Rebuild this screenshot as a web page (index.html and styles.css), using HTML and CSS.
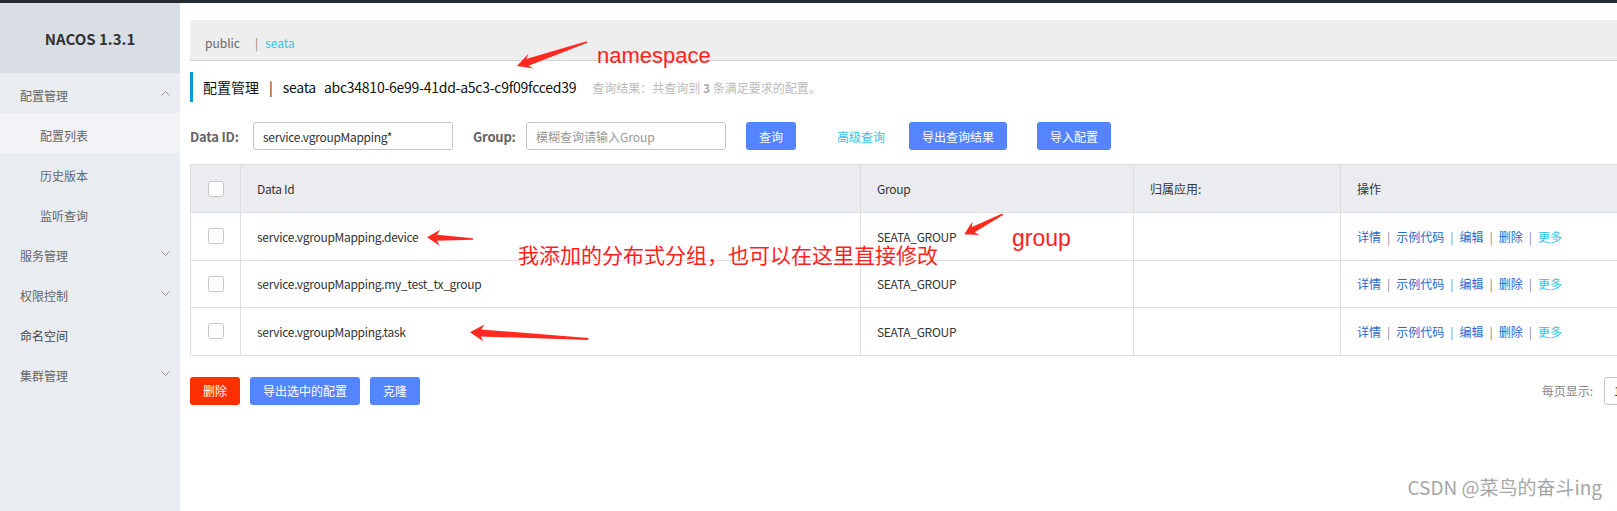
FILE: index.html
```html
<!DOCTYPE html>
<html lang="zh-CN">
<head>
<meta charset="utf-8">
<title>Nacos 配置列表</title>
<link rel="stylesheet" href="styles.css">
</head>
<body>
<div class="topbar"></div>
<div class="layout">
  <aside class="sidebar">
    <div class="logo">NACOS 1.3.1</div>
    <ul class="menu">
      <li class="menu-item"><span>配置管理</span><svg class="chev" width="9" height="5" viewBox="0 0 9 5"><polyline points="0.5,4.5 4.5,0.5 8.5,4.5"/></svg></li>
      <li class="menu-item sub active"><span>配置列表</span></li>
      <li class="menu-item sub"><span>历史版本</span></li>
      <li class="menu-item sub"><span>监听查询</span></li>
      <li class="menu-item"><span>服务管理</span><svg class="chev" width="9" height="5" viewBox="0 0 9 5"><polyline points="0.5,0.5 4.5,4.5 8.5,0.5"/></svg></li>
      <li class="menu-item"><span>权限控制</span><svg class="chev" width="9" height="5" viewBox="0 0 9 5"><polyline points="0.5,0.5 4.5,4.5 8.5,0.5"/></svg></li>
      <li class="menu-item leaf"><span>命名空间</span></li>
      <li class="menu-item"><span>集群管理</span><svg class="chev" width="9" height="5" viewBox="0 0 9 5"><polyline points="0.5,0.5 4.5,4.5 8.5,0.5"/></svg></li>
    </ul>
  </aside>
  <main class="main">
    <div class="ns-bar"><span class="ns">public</span><span class="ns-sep">|</span><span class="ns ns-active">seata</span></div>
    <div class="title">
      <span>配置管理</span><span class="title-sep">|</span><span class="latin">seata</span><span class="ns-id latin">abc34810-6e99-41dd-a5c3-c9f09fcced39</span>
      <span class="result">查询结果：共查询到 <b>3</b> 条满足要求的配置。</span>
    </div>
    <div class="search">
      <span class="lbl lbl-id">Data ID:</span>
      <div class="input latin">service.vgroupMapping*</div>
      <span class="lbl lbl-group">Group:</span>
      <div class="input input-group placeholder">模糊查询请输入Group</div>
      <button class="btn btn-query">查询</button>
      <a class="adv">高级查询</a>
      <button class="btn btn-export">导出查询结果</button>
      <button class="btn btn-import">导入配置</button>
    </div>
    <table class="grid">
      <colgroup><col class="w1"><col class="w2"><col class="w3"><col class="w4"><col class="w5"></colgroup>
      <thead>
        <tr><th class="c1"><span class="cb"></span></th><th class="latin">Data Id</th><th class="latin">Group</th><th>归属应用:</th><th>操作</th></tr>
      </thead>
      <tbody>
        <tr><td class="c1"><span class="cb"></span></td><td class="latin">service.vgroupMapping.device</td><td class="latin">SEATA_GROUP</td><td></td>
          <td class="ops"><a>详情</a><span class="sep">|</span><a>示例代码</a><span class="sep">|</span><a>编辑</a><span class="sep">|</span><a>删除</a><span class="sep">|</span><a class="more">更多</a></td></tr>
        <tr><td class="c1"><span class="cb"></span></td><td class="latin">service.vgroupMapping.my_test_tx_group</td><td class="latin">SEATA_GROUP</td><td></td>
          <td class="ops"><a>详情</a><span class="sep">|</span><a>示例代码</a><span class="sep">|</span><a>编辑</a><span class="sep">|</span><a>删除</a><span class="sep">|</span><a class="more">更多</a></td></tr>
        <tr><td class="c1"><span class="cb"></span></td><td class="latin">service.vgroupMapping.task</td><td class="latin">SEATA_GROUP</td><td></td>
          <td class="ops"><a>详情</a><span class="sep">|</span><a>示例代码</a><span class="sep">|</span><a>编辑</a><span class="sep">|</span><a>删除</a><span class="sep">|</span><a class="more">更多</a></td></tr>
      </tbody>
    </table>
    <div class="actions">
      <button class="btn btn-danger">删除</button>
      <button class="btn btn-exp2">导出选中的配置</button>
      <button class="btn btn-clone">克隆</button>
      <div class="pager"><span class="pager-label">每页显示:</span><div class="select">10</div></div>
    </div>
  </main>
</div>

<svg class="annot" width="1617" height="511" viewBox="0 0 1617 511">
  <polygon points="586.7,41.2 526.2,59.1 528.6,53.5 517,66 533.8,68.6 528.5,65.7 587.3,42.8"/>
  <polygon points="473,238.2 437.1,234.7 440.3,229.8 427,237.3 439.7,245.8 436.9,240.7 473,239.8"/>
  <polygon points="588.4,338 481.2,329.4 484.5,324.6 470,332.3 483.5,341.6 480.8,336.4 588.2,340"/>
  <polygon points="1002.3,213.6 971.8,227 972.4,221.6 964.3,234.3 979.3,235 974.6,232.3 1003.1,215"/>
</svg>
<div class="note note-ns">namespace</div>
<div class="note note-group">group</div>
<div class="note note-cn">我添加的分布式分组，也可以在这里直接修改</div>
<div class="watermark">CSDN @菜鸟的奋斗ing</div>
</body>
</html>
```

FILE: styles.css
```css
* { box-sizing: border-box; margin: 0; padding: 0; }
html, body { width: 1617px; height: 511px; overflow: hidden; }
body {
  position: relative;
  font-family: "Noto Sans CJK SC", "Noto Sans", sans-serif;
  font-size: 12px;
  color: #333;
  background: #fff;
}
.latin { letter-spacing: -0.3px; }
.topbar { height: 3px; background: #252a31; }
.layout { display: flex; height: 508px; }

/* sidebar */
.sidebar { width: 180px; flex: none; background: #e9ecf1; }
.logo {
  height: 70px; background: #d9dde4;
  display: flex; align-items: center; justify-content: center;
  font-weight: bold; font-size: 15px; color: #333;
}
.menu { list-style: none; }
.menu-item {
  height: 40px; display: flex; align-items: center; justify-content: space-between;
  padding: 0 10px 0 20px; color: #666;
}
.menu-item span { padding-top: 5px; }
.menu-item.sub { padding-left: 40px; }
.menu-item.active { background: #f2f3f6; }
.menu-item.leaf { color: #444; }
.chev polyline { fill: none; stroke: #9a9a9a; stroke-width: 1; }

/* main */
.main { flex: 1; min-width: 0; overflow: hidden; padding: 17px 0 0 10px; }
.ns-bar {
  height: 41px; background: #eee; border-bottom: 1px solid #d2d2d2;
  display: flex; align-items: center; padding: 5px 0 0 15px;
}
.ns { color: #666; }
.ns-sep { color: #8a8a7a; margin: 0 7px 0 15px; }
.ns-active { color: #33c3e5; }

.title {
  margin-top: 11px; height: 30px; border-left: 3px solid #0b9bd7;
  padding-left: 10px; display: flex; align-items: center;
  font-size: 14px; color: #111;
}
.title-sep { margin: 0 10px; }
.ns-id { margin-left: 8px; letter-spacing: -0.25px; }
.result { margin-left: 16px; font-size: 12px; color: #bbb; }
.result b { color: #aaa; }

.search { margin-top: 20px; height: 28px; display: flex; align-items: center; }
.lbl { font-weight: bold; color: #666; font-size: 13px; white-space: nowrap; }
.lbl-id { width: 50px; letter-spacing: -0.2px; }
.lbl-group { width: 41px; margin-left: 20px; letter-spacing: -0.2px; }
.input {
  width: 200px; height: 28px; margin-left: 13px;
  border: 1px solid #c4c6cf; border-radius: 3px;
  padding-left: 9px; display: flex; align-items: center; color: #333;
}
.input-group { margin-left: 12px; }
.placeholder { color: #999; }
.btn {
  height: 28px; border: none; border-radius: 3px; background: #5584ff;
  color: #fff; font: inherit; font-size: 12px; padding: 0;
}
.btn-query { width: 50px; margin-left: 20px; }
.adv { margin-left: 41px; color: #33c3e5; }
.btn-export { width: 98px; margin-left: 24px; }
.btn-import { width: 74px; margin-left: 30px; }

/* table */
.grid {
  margin-top: 14px; width: 1490px; border-collapse: collapse; table-layout: fixed;
}
.w1 { width: 50px; } .w2 { width: 620px; } .w3 { width: 273px; } .w4 { width: 207px; } .w5 { width: 340px; }
.grid th, .grid td {
  border: 1px solid #dcdee3; padding: 0 16px;
  text-align: left; font-weight: normal; vertical-align: middle; color: #333;
}
.grid th { background: #ebecf0; height: 48px; }
.grid td { height: 47.6px; }
.grid .c1 { padding: 0; }
.cb {
  display: block; width: 16px; height: 16px; margin: 0 auto;
  border: 1px solid #c4c6cf; border-radius: 3px; background: #fff;
}
.ops a { color: #2a67cf; }
.ops .more { color: #33c3e5; }
.ops .sep { margin: 0 6px; color: #7a8aa8; }

/* bottom actions */
.actions { margin-top: 21px; width: 1490px; height: 28px; display: flex; align-items: center; }
.btn-danger { width: 50px; background: #ff3000; }
.btn-exp2 { width: 110px; margin-left: 10px; }
.btn-clone { width: 50px; margin-left: 10px; }
.pager { margin-left: auto; display: flex; align-items: center; }
.pager-label { color: #888; margin-right: 11px; }
.select {
  width: 76px; height: 28px; border: 1px solid #c4c6cf; border-radius: 3px;
  padding-left: 9px; display: flex; align-items: center; color: #333;
}

/* annotations over the screenshot */
.annot { position: absolute; left: 0; top: 0; pointer-events: none; }
.annot polygon { fill: #ff2a1f; }
.note { position: absolute; color: #ff1e1e; white-space: nowrap; }
.note-ns { left: 597px; top: 45px; font: 22px/22px "Liberation Sans", Arial, sans-serif; }
.note-group { left: 1012px; top: 227px; font: 23px/23px "Liberation Sans", Arial, sans-serif; }
.note-cn { left: 518px; top: 244px; font: 21px/21px "Noto Sans CJK SC", sans-serif; }
.watermark {
  position: absolute; right: 15px; top: 475px;
  font-size: 19px; line-height: 24px; color: #a6a6a6; white-space: nowrap;
}
```
